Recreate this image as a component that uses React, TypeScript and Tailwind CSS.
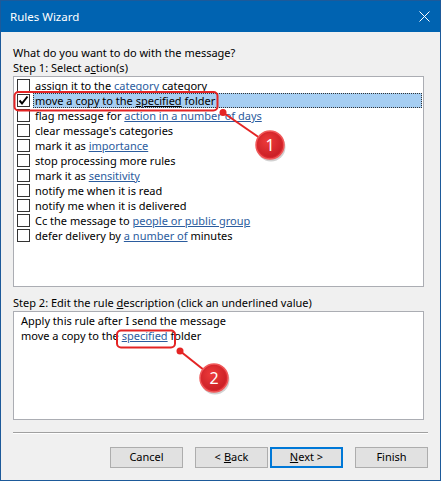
import React from "react";

type Part = string | { link: string };

const actions: { parts: Part[]; checked?: boolean; selected?: boolean }[] = [
  { parts: ["assign it to the ", { link: "category" }, " category"] },
  { parts: ["move a copy to the ", { link: "specified" }, " folder"], checked: true, selected: true },
  { parts: ["flag message for ", { link: "action in a number of days" }] },
  { parts: ["clear message's categories"] },
  { parts: ["mark it as ", { link: "importance" }] },
  { parts: ["stop processing more rules"] },
  { parts: ["mark it as ", { link: "sensitivity" }] },
  { parts: ["notify me when it is read"] },
  { parts: ["notify me when it is delivered"] },
  { parts: ["Cc the message to ", { link: "people or public group" }] },
  { parts: ["defer delivery by ", { link: "a number of" }, " minutes"] },
];

const Checkbox = ({ checked }: { checked?: boolean }) => (
  <div className="w-[13px] h-[13px] border border-[#333] bg-white flex items-center justify-center shrink-0">
    {checked && (
      <svg width="11" height="11" viewBox="0 0 11 11">
        <path d="M1.5 5.5 L4 8.5 L9.5 1.5" fill="none" stroke="#000" strokeWidth="2" />
      </svg>
    )}
  </div>
);

const Button = ({ children, primary }: { children: React.ReactNode; primary?: boolean }) => (
  <div
    className={
      primary
        ? "w-[73px] h-[21px] border-2 border-[#0078d7] bg-[#e1e1e1] flex items-center justify-center"
        : "w-[73px] h-[21px] border border-[#adadad] bg-[#e1e1e1] flex items-center justify-center"
    }
  >
    {children}
  </div>
);

const Badge = ({ cx, cy, label }: { cx: number; cy: number; label: string }) => (
  <g>
    <circle cx={cx + 1} cy={cy + 2} r="14.5" fill="rgba(0,0,0,0.18)" />
    <circle cx={cx} cy={cy} r="14" fill="#d9272e" stroke="#f05a5a" strokeWidth="1.5" />
    <circle cx={cx} cy={cy} r="12" fill="url(#badge)" />
    <text
      x={cx}
      y={cy + 5.5}
      textAnchor="middle"
      fill="#fff"
      fontSize="16"
      fontFamily="'Noto Sans', sans-serif"
    >
      {label}
    </text>
  </g>
);

export default function App() {
  return (
    <div
      className="relative w-[441px] h-[481px] bg-[#f0f0f0] border border-[#1d5a9a] flex flex-col text-[11px] text-black"
      style={{ fontFamily: "'Noto Sans', 'Open Sans', sans-serif" }}
    >
      <div className="h-[31px] bg-[#0063b1] flex items-center justify-between pl-[9px] pr-[10px] text-white shrink-0">
        <span className="text-[11.5px]">Rules Wizard</span>
        <svg width="11" height="11" viewBox="0 0 11 11">
          <path d="M0.5 0.5 L10.5 10.5 M10.5 0.5 L0.5 10.5" stroke="#fff" strokeWidth="1" />
        </svg>
      </div>

      <div className="flex flex-col px-[12px] pt-[13px]">
        <div className="h-[15px] leading-[15px]">What do you want to do with the message?</div>
        <div className="h-[15px] leading-[15px]">
          Step 1: Select a<span className="underline">c</span>tion(s)
        </div>

        <div className="mt-[1px] w-[411px] h-[211px] border border-[#abadb3] bg-white pt-[1px] pl-[3px] pr-[1px] flex flex-col">
          {actions.map((a, i) => (
            <div key={i} className="h-[15px] flex items-center">
              <Checkbox checked={a.checked} />
              <div
                className={
                  a.selected
                    ? "ml-[3px] h-[15px] flex-1 flex items-center pl-[1px] bg-[#a6cef2] border border-dotted border-[#333]"
                    : "ml-[3px] h-[15px] flex-1 flex items-center pl-[2px]"
                }
              >
                <span className="whitespace-pre leading-[15px]">
                  {a.parts.map((p, j) =>
                    typeof p === "string" ? (
                      <span key={j}>{p}</span>
                    ) : (
                      <span
                        key={j}
                        className={a.selected ? "underline" : "underline text-[#2b5c9e]"}
                      >
                        {p.link}
                      </span>
                    )
                  )}
                </span>
              </div>
            </div>
          ))}
        </div>

        <div className="mt-[8px] h-[15px] leading-[15px]">
          Step 2: Edit the rule <span className="underline">d</span>escription (click an underlined value)
        </div>
        <div className="mt-[1px] w-[411px] h-[109px] border border-[#abadb3] bg-white pl-[7px] pt-[1px]">
          <div className="h-[15px] leading-[15px]">Apply this rule after I send the message</div>
          <div className="h-[15px] leading-[15px] whitespace-pre">
            move a copy to the <span className="underline text-[#2b5c9e]">specified</span> folder
          </div>
        </div>

        <div className="mt-[12px] w-[415px] h-[2px] border-t border-[#a0a0a0] border-b border-b-white" />

        <div className="mt-[13px] flex justify-end w-[415px] gap-[12px]">
          <Button>Cancel</Button>
          <div className="flex gap-[2px]">
            <Button>
              &lt; <span className="underline ml-[3px]">B</span>ack
            </Button>
            <Button primary>
              <span className="underline">N</span>ext &gt;
            </Button>
          </div>
          <Button>Finish</Button>
        </div>
      </div>

      <svg className="absolute inset-0 pointer-events-none" width="441" height="481" viewBox="0 0 441 481">
        <defs>
          <radialGradient id="badge" cx="0.4" cy="0.35" r="0.7">
            <stop offset="0" stopColor="#ee3b3b" />
            <stop offset="1" stopColor="#c81e24" />
          </radialGradient>
        </defs>
        <rect x="13.5" y="91" width="203" height="18.5" rx="4" fill="none" stroke="#e42424" strokeWidth="2" />
        <line x1="222" y1="111.5" x2="269" y2="144" stroke="#e42424" strokeWidth="2" />
        <circle cx="222" cy="111.5" r="3.5" fill="#e42424" />
        <Badge cx={269} cy={144} label="1" />

        <rect x="116" y="329.5" width="58" height="17" rx="4" fill="none" stroke="#e42424" strokeWidth="2" />
        <line x1="179" y1="350" x2="213" y2="377" stroke="#e42424" strokeWidth="2" />
        <circle cx="179" cy="350" r="3.5" fill="#e42424" />
        <Badge cx={213} cy={377} label="2" />
      </svg>
    </div>
  );
}
